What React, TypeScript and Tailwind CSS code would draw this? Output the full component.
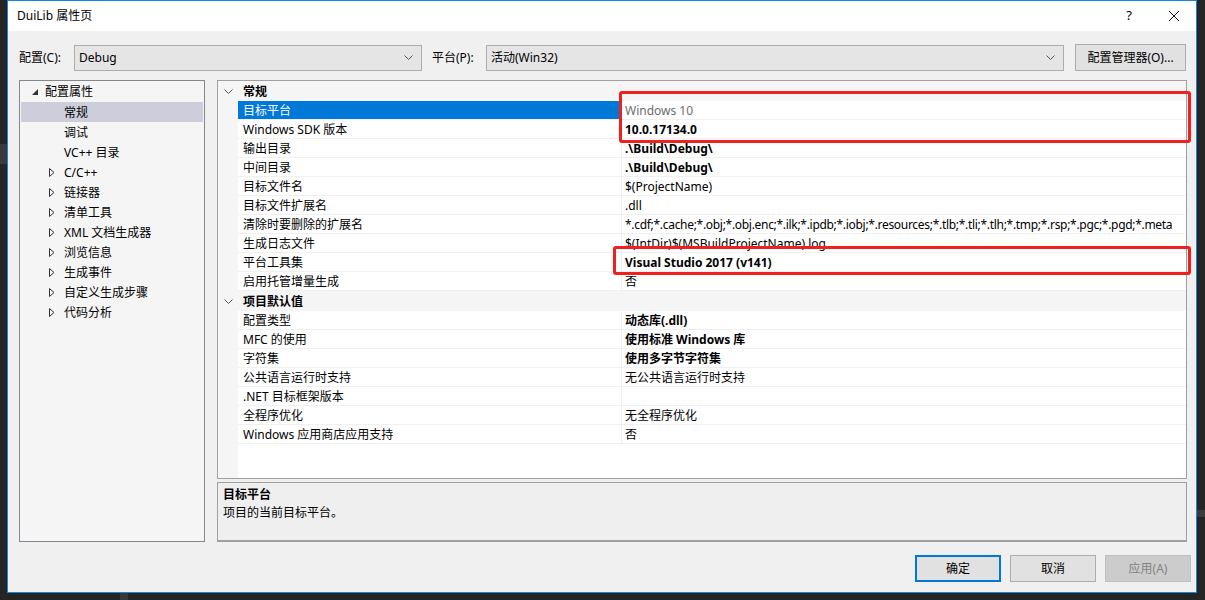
import React from 'react';

const font = "font-['Segoe_UI','Noto_Sans','Noto_Sans_CJK_SC',sans-serif]";

const general = [
  { name: '目标平台', value: 'Windows 10', gray: true, selected: true },
  { name: 'Windows SDK 版本', value: '10.0.17134.0', bold: true },
  { name: '输出目录', value: '.\\Build\\Debug\\', bold: true },
  { name: '中间目录', value: '.\\Build\\Debug\\', bold: true },
  { name: '目标文件名', value: '$(ProjectName)' },
  { name: '目标文件扩展名', value: '.dll' },
  {
    name: '清除时要删除的扩展名',
    value: '*.cdf;*.cache;*.obj;*.obj.enc;*.ilk;*.ipdb;*.iobj;*.resources;*.tlb;*.tli;*.tlh;*.tmp;*.rsp;*.pgc;*.pgd;*.meta',
    tight: true,
  },
  { name: '生成日志文件', value: '$(IntDir)$(MSBuildProjectName).log' },
  { name: '平台工具集', value: 'Visual Studio 2017 (v141)', bold: true },
  { name: '启用托管增量生成', value: '否' },
];

const defaults = [
  { name: '配置类型', value: '动态库(.dll)', bold: true },
  { name: 'MFC 的使用', value: '使用标准 Windows 库', bold: true },
  { name: '字符集', value: '使用多字节字符集', bold: true },
  { name: '公共语言运行时支持', value: '无公共语言运行时支持' },
  { name: '.NET 目标框架版本', value: '' },
  { name: '全程序优化', value: '无全程序优化' },
  { name: 'Windows 应用商店应用支持', value: '否' },
];

const treeItems = ['C/C++', '链接器', '清单工具', 'XML 文档生成器', '浏览信息', '生成事件', '自定义生成步骤', '代码分析'];

const Chevron = ({ className = '' }: { className?: string }) => (
  <svg width="9" height="5" viewBox="0 0 9 5" className={className}>
    <path d="M0.5 0.5 L4.5 4.5 L8.5 0.5" fill="none" stroke="#555" strokeWidth="1" />
  </svg>
);

const Collapsed = () => (
  <svg width="6" height="9" viewBox="0 0 6 9">
    <path d="M0.5 0.5 L5 4.5 L0.5 8.5 Z" fill="none" stroke="#333" strokeWidth="1" />
  </svg>
);

const Expanded = () => (
  <svg width="6" height="6" viewBox="0 0 6 6">
    <path d="M6 0 L6 6 L0 6 Z" fill="#333" />
  </svg>
);

type Row = { name: string; value: string; bold?: boolean; gray?: boolean; selected?: boolean; tight?: boolean };

const Category = ({ label }: { label: string }) => (
  <div className="flex h-[20px] bg-[#f5f5f5]">
    <div className="flex w-[20px] items-center justify-center">
      <Chevron />
    </div>
    <div className="flex items-center pl-[5px] pt-px text-[12px] font-bold leading-none">{label}</div>
  </div>
);

const PropRow = ({ row }: { row: Row }) => (
  <div className="flex h-[19px]">
    <div className="w-[20px] bg-[#f5f5f5]" />
    <div
      className={`flex w-[383px] items-center border-b border-[#f0f0f0] pl-[5px] pt-px text-[12px] leading-none ${
        row.selected ? 'bg-[#0078d7] text-white' : 'bg-white text-black'
      }`}
    >
      {row.name}
    </div>
    <div className="w-px bg-[#f0f0f0]" />
    <div
      className={`flex w-[564px] items-center overflow-hidden whitespace-nowrap border-b border-[#f0f0f0] bg-white pl-[3px] pt-px text-[12px] leading-none ${
        row.bold ? 'font-bold' : ''
      } ${row.gray ? 'text-[#6d6d6d]' : 'text-black'} ${row.tight ? 'tracking-[-0.3px]' : ''}`}
    >
      {row.value}
    </div>
  </div>
);

const Select = ({ value, width }: { value: string; width: string }) => (
  <div className={`flex h-[26px] ${width} items-center justify-between border border-[#adadad] bg-[#e5e5e5] pl-[4px] pr-[8px]`}>
    <span className="text-[12px]">{value}</span>
    <Chevron />
  </div>
);

const Button = ({ label, className }: { label: string; className: string }) => (
  <div className={`flex h-[27px] w-[86px] items-center justify-center text-[12px] ${className}`}>{label}</div>
);

export default function App() {
  return (
    <div className={`relative h-[600px] w-[1205px] overflow-hidden bg-[#252526] ${font} text-black`}>
      <div className="absolute left-0 top-[144px] h-[20px] w-[7px] bg-[#3a3a3c]" />
      <div className="absolute left-[120px] top-[593px] h-[7px] w-[8px] bg-[#38383a]" />
      <div className="absolute left-[1197px] top-[510px] h-[7px] w-[8px] bg-[#3c3c3e]" />

      <div className="ml-[7px] flex h-[593px] w-[1190px] flex-col border border-[#1883d7] bg-[#f0f0f0]">
        {/* title bar */}
        <div className="flex h-[30px] items-center bg-white pl-[9px] pr-[16px]">
          <span className="text-[12px]">DuiLib 属性页</span>
          <span className="ml-auto mr-[36px] text-[13px]">?</span>
          <svg width="12" height="12" viewBox="0 0 12 12">
            <path d="M1 1 L11 11 M11 1 L1 11" stroke="#111" strokeWidth="1" />
          </svg>
        </div>

        {/* configuration row */}
        <div className="mt-[13px] flex h-[27px] items-center pl-[11px]">
          <span className="w-[55px] text-[12px]">配置(C):</span>
          <Select value="Debug" width="w-[348px]" />
          <span className="ml-[10px] w-[54px] text-[12px]">平台(P):</span>
          <Select value="活动(Win32)" width="w-[578px]" />
          <div className="ml-[11px] flex h-[27px] w-[111px] items-center justify-center border border-[#adadad] bg-[#e1e1e1] text-[12px]">
            配置管理器(O)...
          </div>
        </div>

        {/* main area */}
        <div className="mt-[9px] flex pl-[11px]">
          <div className="h-[462px] w-[186px] border border-[#828790] bg-[#f5f5f5] pt-px">
            <div className="flex h-[20px] items-center">
              <div className="flex w-[25px] justify-end pr-[7px]">
                <Expanded />
              </div>
              <span className="text-[12px]">配置属性</span>
            </div>
            <div className="mx-px flex h-[20px] items-center bg-[#cccedb] pl-[43px] pt-px text-[12px]">常规</div>
            <div className="flex h-[20px] items-center pl-[44px] pt-px text-[12px]">调试</div>
            <div className="flex h-[20px] items-center pl-[44px] pt-px text-[12px]">VC++ 目录</div>
            {treeItems.map((t) => (
              <div key={t} className="flex h-[20px] items-center pt-px text-[12px]">
                <div className="flex w-[44px] justify-end pr-[9px]">
                  <Collapsed />
                </div>
                {t}
              </div>
            ))}
          </div>

          <div className="ml-[12px] flex flex-col">
            <div className="h-[399px] w-[970px] overflow-hidden border border-[#a0a0a0] bg-white">
              <Category label="常规" />
              {general.map((r, i) => (
                <PropRow key={i} row={r} />
              ))}
              <Category label="项目默认值" />
              {defaults.map((r, i) => (
                <PropRow key={i} row={r} />
              ))}
              <div className="flex h-full">
                <div className="w-[20px] bg-[#f5f5f5]" />
              </div>
            </div>
            <div className="mt-[3px] h-[60px] w-[970px] border border-b-2 border-[#a0a0a0] bg-[#efefef] pl-[5px] pt-[3px]">
              <div className="text-[12px] font-bold leading-[18px]">目标平台</div>
              <div className="text-[12px] leading-[18px]">项目的当前目标平台。</div>
            </div>
          </div>
        </div>

        {/* buttons */}
        <div className="mt-[13px] flex justify-end gap-[9px] pr-[5px]">
          <Button label="确定" className="border-2 border-[#0078d7] bg-[#e1e1e1]" />
          <Button label="取消" className="border border-[#adadad] bg-[#e1e1e1]" />
          <Button label="应用(A)" className="border border-[#bfbfbf] bg-[#cccccc] text-[#838383]" />
        </div>
      </div>

      {/* annotation boxes */}
      <div className="absolute left-[619px] top-[91px] h-[52px] w-[572px] rounded-[3px] border-[3px] border-[#f0201e]" />
      <div className="absolute left-[613px] top-[246px] h-[29px] w-[578px] rounded-[3px] border-[3px] border-[#f0201e]" />
    </div>
  );
}
